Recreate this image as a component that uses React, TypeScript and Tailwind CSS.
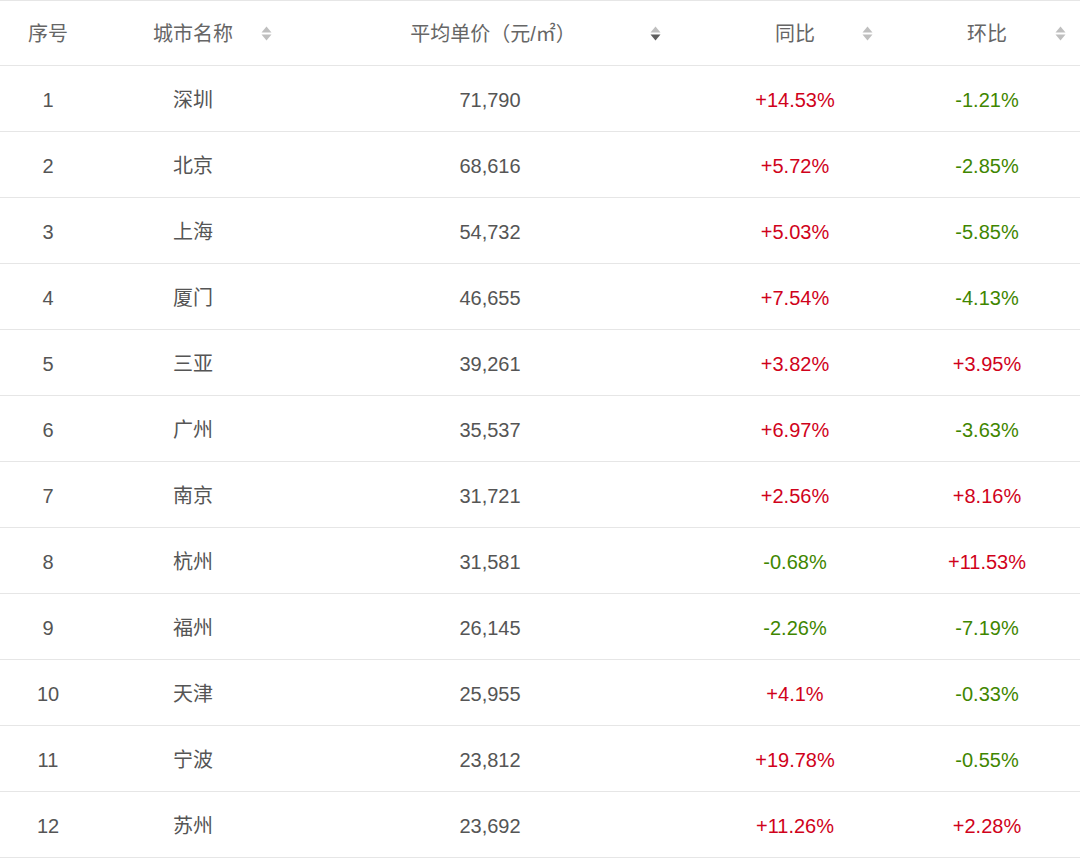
import React from 'react';

type Row = { id: number; city: string; price: string; yoy: string; mom: string };

const rows: Row[] = [
  { id: 1, city: '深圳', price: '71,790', yoy: '+14.53%', mom: '-1.21%' },
  { id: 2, city: '北京', price: '68,616', yoy: '+5.72%', mom: '-2.85%' },
  { id: 3, city: '上海', price: '54,732', yoy: '+5.03%', mom: '-5.85%' },
  { id: 4, city: '厦门', price: '46,655', yoy: '+7.54%', mom: '-4.13%' },
  { id: 5, city: '三亚', price: '39,261', yoy: '+3.82%', mom: '+3.95%' },
  { id: 6, city: '广州', price: '35,537', yoy: '+6.97%', mom: '-3.63%' },
  { id: 7, city: '南京', price: '31,721', yoy: '+2.56%', mom: '+8.16%' },
  { id: 8, city: '杭州', price: '31,581', yoy: '-0.68%', mom: '+11.53%' },
  { id: 9, city: '福州', price: '26,145', yoy: '-2.26%', mom: '-7.19%' },
  { id: 10, city: '天津', price: '25,955', yoy: '+4.1%', mom: '-0.33%' },
  { id: 11, city: '宁波', price: '23,812', yoy: '+19.78%', mom: '-0.55%' },
  { id: 12, city: '苏州', price: '23,692', yoy: '+11.26%', mom: '+2.28%' },
];

const SortIcon = ({ active }: { active?: boolean }) => (
  <svg width="11" height="15" viewBox="0 0 11 15">
    <path d="M5.5 0.5 L10.5 6.5 L0.5 6.5 Z" fill="#bfbfbf" />
    <path d="M0.5 8.5 L10.5 8.5 L5.5 14.5 Z" fill={active ? '#5f5f5f' : '#bfbfbf'} />
  </svg>
);

const Change = ({ v }: { v: string }) => (
  <span className={v.startsWith('-') ? 'text-[#3f8600]' : 'text-[#d0021b]'}>{v}</span>
);

const HeadCell = ({ label, width, iconGap, active }: { label: string; width: string; iconGap: string; active?: boolean }) => (
  <div className={`${width} grid grid-cols-[1fr_auto_1fr] items-center`}>
    <div />
    <span className="whitespace-nowrap">{label}</span>
    <div className={`flex justify-end ${iconGap}`}>
      <SortIcon active={active} />
    </div>
  </div>
);

export default function App() {
  return (
    <div
      className="w-[1080px] h-[858px] bg-white text-[20px] text-[#555]"
      style={{ fontFamily: '"Liberation Sans", "Noto Sans CJK SC", sans-serif' }}
    >
      <div className="flex h-[66px] items-center pt-[1px] border-t border-b border-[#e6e6e6] text-[#666]">
        <div className="w-[96px] text-center">序号</div>
        <HeadCell label="城市名称" width="w-[194px]" iconGap="pr-[18px]" />
        <HeadCell label="平均单价（元/㎡）" width="w-[406px]" iconGap="pr-[35px]" active />
        <HeadCell label="同比" width="w-[198px]" iconGap="pr-[21px]" />
        <HeadCell label="环比" width="w-[186px]" iconGap="pr-[14px]" />
      </div>
      {rows.map(r => (
        <div key={r.id} className="flex h-[66px] items-center pt-[2px] border-b border-[#e6e6e6]">
          <div className="w-[96px] text-center">{r.id}</div>
          <div className="w-[194px] text-center">{r.city}</div>
          <div className="w-[406px] pr-[6px] text-center">{r.price}</div>
          <div className="w-[198px] text-center"><Change v={r.yoy} /></div>
          <div className="w-[186px] text-center"><Change v={r.mom} /></div>
        </div>
      ))}
    </div>
  );
}
